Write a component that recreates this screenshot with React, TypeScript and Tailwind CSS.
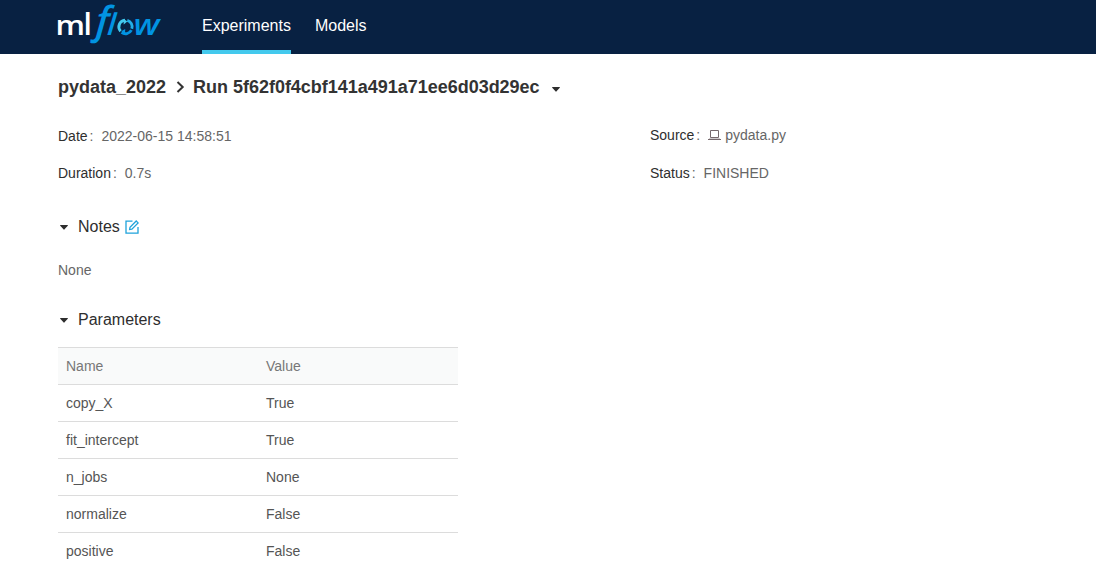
import React from "react";

const parameters = [
  { name: "copy_X", value: "True" },
  { name: "fit_intercept", value: "True" },
  { name: "n_jobs", value: "None" },
  { name: "normalize", value: "False" },
  { name: "positive", value: "False" },
];

function Logo() {
  return (
    <svg
      className="block h-[48px] w-[112px] shrink-0 overflow-visible"
      viewBox="0 0 112 48"
      fontFamily="'Open Sans', 'Noto Sans', sans-serif"
      fontWeight="600"
      role="img"
      aria-label="mlflow"
    >
      <g fill="#fff">
        <text x="-2.5" y="35" fontSize="27.5" textLength="29.5" lengthAdjust="spacingAndGlyphs">m</text>
        <text x="25.4" y="35" fontSize="30">l</text>
      </g>
      <g fill="#0194e2" fontStyle="italic">
        <text transform="translate(37.2 33.8) skewX(-4)" fontSize="38.5">f</text>
        <text transform="translate(48.8 35) skewX(-5)" fontSize="30">l</text>
        <text x="75.5" y="35" fontSize="29.5" textLength="26" lengthAdjust="spacingAndGlyphs">w</text>
      </g>
      <g fill="none" strokeWidth="2.9">
        <path d="M62.6 31.2A6.5 6.5 0 0 1 67 20.3" stroke="#43c9ed" />
        <path d="M63.6 32.3A6.5 6.5 0 0 0 73.4 30.2" stroke="#0194e2" />
        <path d="M69.3 20.4A6.5 6.5 0 0 1 73.8 28.8" stroke="#22aee8" />
      </g>
      <path d="M65.7 18.8L69.3 21.6L65.7 24.6Z" fill="#43c9ed" />
      <path d="M67.2 29L67 34.2L63.3 31.2Z" fill="#0194e2" />
    </svg>
  );
}

function Caret() {
  return (
    <svg className="h-[5px] w-[8px] shrink-0" viewBox="0 0 8 5" fill="#2e2e2e">
      <path d="M0 .4Q0 0 .4 0H7.6Q8 0 8 .4L4.3 4.6Q4 5 3.7 4.6Z" />
    </svg>
  );
}

function Detail({ label, children }: { label: string; children: React.ReactNode }) {
  return (
    <div className="flex h-[22px] items-center">
      <span className="text-[#2e2e2e]">{label}</span>
      <span className="mr-2 ml-[2px] text-[#666]">:</span>
      <span className="flex items-center text-[#666]">{children}</span>
    </div>
  );
}

function EditIcon() {
  return (
    <svg className="ml-[5px] h-[14px] w-[14px]" viewBox="0 0 14 14" fill="none" stroke="#1fa3db" strokeWidth="1.3">
      <path d="M7.5 1.2H1V13.2H13V7" />
      <path d="M4.6 9.5L5 7.2L11.2 1L13.1 2.9L6.9 9.1Z" />
    </svg>
  );
}

function LaptopIcon() {
  return (
    <svg className="mr-[4px] h-[12px] w-[13px]" viewBox="0 0 13 12" fill="none" stroke="#75686c" strokeWidth="1">
      <path d="M2.5 8.5V1.5H10.5V8.5Z" />
      <path d="M0 10.5H13" />
      <path d="M1 9.5H12" strokeOpacity=".35" />
    </svg>
  );
}

export default function App() {
  return (
    <div className="h-[586px] overflow-hidden bg-white font-['Liberation_Sans',Arial,sans-serif] text-[14px] leading-[22px] text-[#555]">
      <header className="flex h-[54px] bg-[#082142] pl-[58px] text-[16px] text-white">
        <Logo />
        <nav className="ml-8 flex gap-6">
          <a className="h-[54px] border-b-4 border-[#43c9ed] pt-[15px]">Experiments</a>
          <a className="pt-[15px]">Models</a>
        </nav>
      </header>
      <main className="px-[58px]">
        <h1 className="mt-[21px] flex h-6 items-center text-[18px] leading-6 font-bold text-[#333]">
          <span>pydata_2022</span>
          <svg className="mr-[8px] ml-[10px] h-[12px] w-[9px]" viewBox="0 0 9 12" fill="none" stroke="#333" strokeWidth="2">
            <path d="M1.5 1L6.7 6L1.5 11" />
          </svg>
          <span className="tracking-[-0.02px]">Run 5f62f0f4cbf141a491a71ee6d03d29ec</span>
          <span className="mt-[5px] ml-[12px] flex"><Caret /></span>
        </h1>
        <div className="mt-[25px] grid grid-cols-[592px_1fr] gap-y-[15px]">
          <div className="pt-px"><Detail label="Date">2022-06-15 14:58:51</Detail></div>
          <Detail label="Source"><LaptopIcon />pydata.py</Detail>
          <Detail label="Duration">0.7s</Detail>
          <Detail label="Status">FINISHED</Detail>
        </div>
        <section>
          <h2 className="mt-[31px] flex h-6 items-center pl-[2px] text-[16px] leading-6 text-[#2e2e2e]">
            <Caret /><span className="ml-[10px]">Notes</span><EditIcon />
          </h2>
          <p className="mt-[20px] text-[#666]">None</p>
        </section>
        <section>
          <h2 className="mt-[27px] flex h-6 items-center pl-[2px] text-[16px] leading-6 text-[#2e2e2e]">
            <Caret /><span className="ml-[10px]">Parameters</span>
          </h2>
          <table className="mt-[15px] w-[400px] table-fixed border-collapse text-left">
            <thead>
              <tr className="h-[37px] border-y border-[#dcdcdc] bg-[#f9fafa] text-[#777]">
                <th className="px-2 font-normal">Name</th>
                <th className="px-2 font-normal">Value</th>
              </tr>
            </thead>
            <tbody>
              {parameters.map(({ name, value }) => (
                <tr key={name} className="h-[37px] border-b border-[#dcdcdc] last:border-b-0">
                  <td className="px-2">{name}</td>
                  <td className="px-2">{value}</td>
                </tr>
              ))}
            </tbody>
          </table>
        </section>
      </main>
    </div>
  );
}
